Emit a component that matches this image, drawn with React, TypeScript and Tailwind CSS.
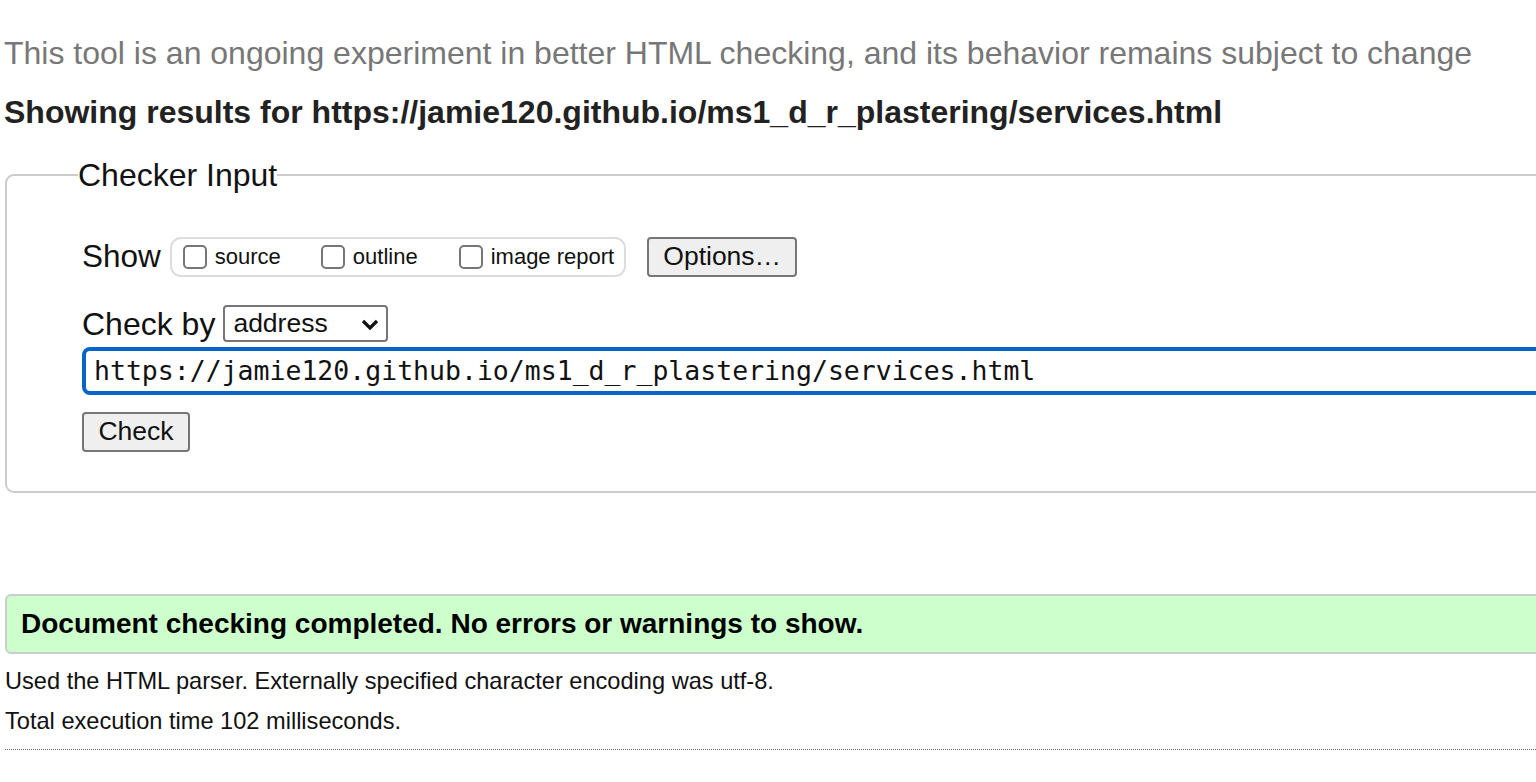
import { useState } from 'react';

const sans = { fontFamily: '"Liberation Sans", Arial, sans-serif' };

function Box({ label, pad }: { label: string; pad: string }) {
  return (
    <label className={`flex items-center ${pad}`}>
      <span className="h-[24px] w-[24px] rounded-[5px] border-2 border-[#767676] bg-white" />
      <span className="ml-[8px] text-[22px] leading-none text-[#111]">{label}</span>
    </label>
  );
}

export default function App() {
  const [url] = useState('https://jamie120.github.io/ms1_d_r_plastering/services.html');

  return (
    <div className="h-[782px] w-[1536px] overflow-hidden bg-white text-[#111]" style={sans}>
      <p className="ml-[4px] pt-[34px] text-[32px] leading-[38px] text-[#777]">
        This tool is an ongoing experiment in better HTML checking, and its behavior remains subject to change
      </p>
      <h2 className="ml-[4px] mt-[22px] text-[32px] font-bold leading-[36px] text-[#222]">
        Showing results for https://jamie120.github.io/ms1_d_r_plastering/services.html
      </h2>

      <fieldset className="ml-[5px] mt-[27px] w-[1620px] rounded-[9px] border-2 border-[#ccc] pb-[39px] pl-[75px]">
        <legend className="-ml-[4px] px-0 text-[32px] leading-[36px]">Checker Input</legend>

        <div className="mt-[44px] flex items-center">
          <span className="text-[31.5px] leading-none">Show</span>
          <div className="ml-[9px] flex h-[40px] items-center rounded-[11px] border-2 border-[#ddd] pl-[11px] pr-[10px]">
            <Box label="source" pad="" />
            <Box label="outline" pad="ml-[40px]" />
            <Box label="image report" pad="ml-[41px]" />
          </div>
          <button className="ml-[21px] flex h-[40px] w-[150px] items-center justify-center rounded-[4px] border-2 border-[#767676] bg-[#efefef] text-[26.5px]">
            Options…
          </button>
        </div>

        <div className="mt-[28px] flex items-center">
          <span className="text-[32px] leading-none">Check by</span>
          <div className="ml-[8px] flex h-[37px] w-[165px] items-center justify-between rounded-[4px] border-2 border-[#767676] pl-[8px] pr-[6px]">
            <span className="text-[26.5px] leading-none">address</span>
            <svg width="20" height="14" viewBox="0 0 20 14">
              <path d="M3 4l7 7 7-7" fill="none" stroke="#111" strokeWidth="3.2" />
            </svg>
          </div>
        </div>

        <div className="mt-[5px] flex h-[48px] items-center rounded-[8px] border-[4px] border-[#0864c8] pl-[8px]">
          <span className="text-[26.5px] leading-none" style={{ fontFamily: '"DejaVu Sans Mono", monospace' }}>
            {url}
          </span>
        </div>

        <button className="mt-[17px] flex h-[40px] w-[108px] items-center justify-center rounded-[4px] border-2 border-[#767676] bg-[#efefef] text-[26.5px]">
          Check
        </button>
      </fieldset>

      <div className="ml-[5px] mt-[101px] flex h-[60px] w-[1600px] items-center rounded-[6px] border-2 border-[#ccc] bg-[#ccffcc] pl-[14px]">
        <span className="text-[28px] font-bold text-black">Document checking completed. No errors or warnings to show.</span>
      </div>

      <p className="ml-[5px] mt-[13px] text-[23.6px] leading-[28px]">
        Used the HTML parser. Externally specified character encoding was utf-8.
      </p>
      <p className="ml-[5px] mt-[12px] text-[23.6px] leading-[28px]">Total execution time 102 milliseconds.</p>
      <div className="ml-[5px] mt-[14px] border-t border-dotted border-[#666]" />
    </div>
  );
}
